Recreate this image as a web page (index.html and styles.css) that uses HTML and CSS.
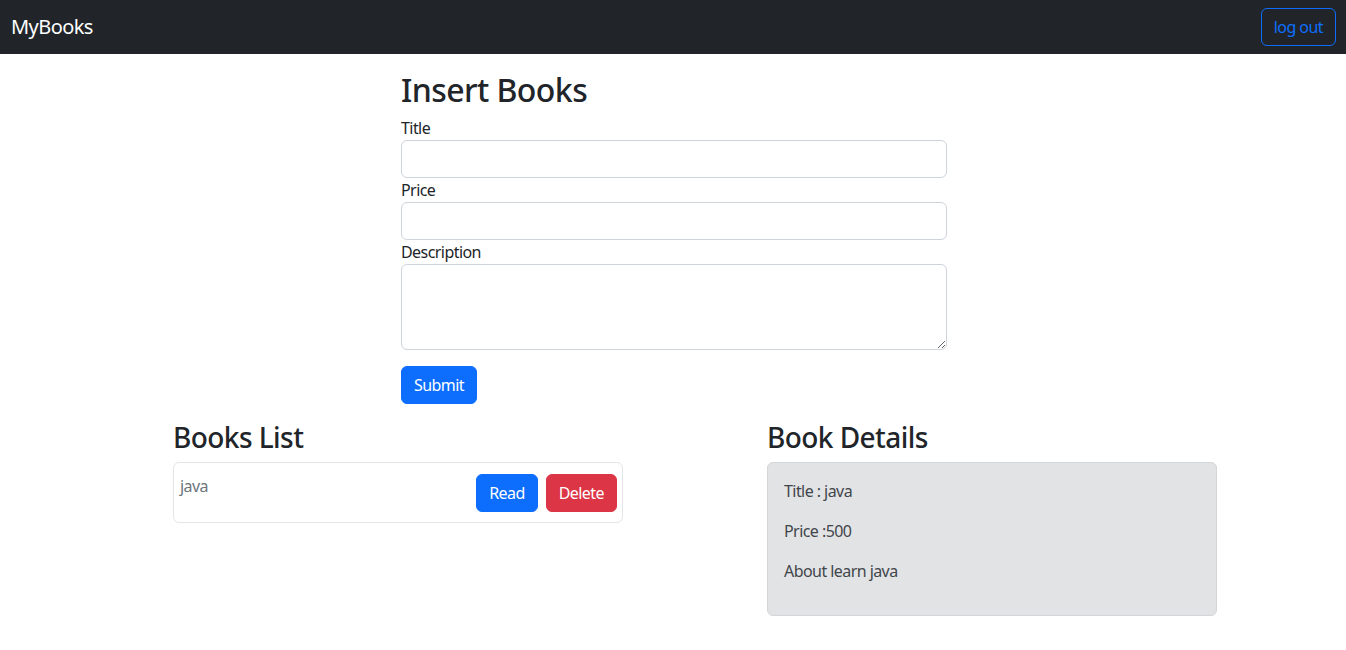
FILE: index.html
```html
<!DOCTYPE html>
<html lang="en">
<head>
<meta charset="utf-8">
<title>MyBooks</title>
<link rel="stylesheet" href="styles.css">
</head>
<body>
<nav class="navbar">
  <span class="brand">MyBooks</span>
  <button class="btn btn-outline">log out</button>
</nav>
<main class="page">
  <section class="insert">
    <h2 class="title-lg">Insert Books</h2>
    <form class="form">
      <label class="label">Title</label>
      <input class="control" type="text">
      <label class="label">Price</label>
      <input class="control" type="text">
      <label class="label">Description</label>
      <textarea class="control area" rows="3"></textarea>
      <button type="button" class="btn btn-primary submit">Submit</button>
    </form>
  </section>
  <section class="lower">
    <div class="col">
      <h3 class="title-md">Books List</h3>
      <div class="card">
        <span class="book-name">java</span>
        <div class="actions">
          <button class="btn btn-primary">Read</button>
          <button class="btn btn-danger">Delete</button>
        </div>
      </div>
    </div>
    <div class="col">
      <h3 class="title-md">Book Details</h3>
      <div class="details">
        <p>Title : java</p>
        <p>Price :500</p>
        <p>About learn java</p>
      </div>
    </div>
  </section>
</main>
</body>
</html>
```
FILE: styles.css
```css
* { box-sizing: border-box; }
html, body { margin: 0; }
body {
  font-family: "Segoe UI", "Noto Sans", "Open Sans", sans-serif;
  font-size: 16px;
  line-height: 24px;
  letter-spacing: -0.035em;
  color: #212529;
  background: #fff;
}
.navbar {
  height: 54px;
  background: #212529;
  display: flex;
  align-items: center;
  justify-content: space-between;
  padding: 0 10px 0 11px;
}
.brand {
  color: #fff;
  font-size: 20px;
  line-height: 30px;
}
.btn {
  font-family: inherit;
  letter-spacing: inherit;
  font-size: 16px;
  line-height: 24px;
  padding: 6px 12px;
  border-radius: 6px;
  border: 1px solid transparent;
  cursor: pointer;
}
.btn-outline {
  background: transparent;
  color: #0d6efd;
  border-color: #0d6efd;
}
.btn-primary { background: #0d6efd; border-color: #0d6efd; color: #fff; }
.btn-danger { background: #dc3545; border-color: #dc3545; color: #fff; }
.page { padding-top: 17px; }
.insert {
  width: 546px;
  margin-left: calc(50% - 272px);
}
.title-lg {
  margin: 0 0 8px;
  font-size: 32px;
  line-height: 37px;
  font-weight: 500;
}
.title-md {
  margin: 0 0 8px;
  font-size: 28px;
  line-height: 34px;
  font-weight: 500;
}
.form { display: flex; flex-direction: column; align-items: flex-start; }
.label { display: block; }
.control {
  display: block;
  width: 100%;
  height: 38px;
  padding: 6px 12px;
  font-family: inherit;
  font-size: 16px;
  line-height: 24px;
  border: 1px solid #ced4da;
  border-radius: 6px;
  background: #fff;
  margin: 0;
}
.area { height: 86px; resize: vertical; }
.submit { margin-top: 16px; }
.lower {
  display: flex;
  gap: 144px;
  margin-top: 16px;
  margin-left: calc(50% - 500px);
}
.col { width: 450px; }
.card {
  border: 1px solid #e3e5e8;
  border-radius: 6px;
  display: flex;
  justify-content: space-between;
  align-items: flex-start;
  padding: 11px 5px 10px 6px;
}
.book-name { color: #6c757d; }
.actions { display: flex; gap: 8px; }
.details {
  background: #e2e3e5;
  border: 1px solid #d3d6d8;
  border-radius: 6px;
  padding: 16px 16px 16px;
  color: #41464b;
}
.details p { margin: 0 0 16px; }
```
